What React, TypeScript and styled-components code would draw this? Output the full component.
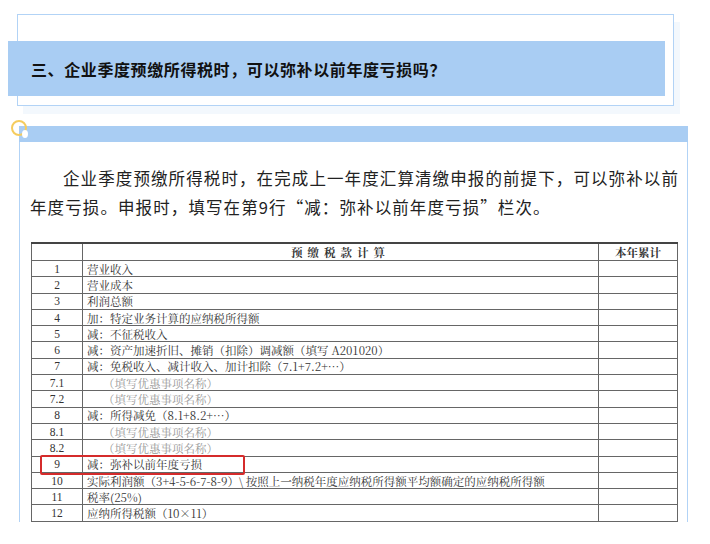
import styled, { createGlobalStyle } from 'styled-components';

const Global = createGlobalStyle`
  body { margin: 0; background: #fff; font-family: "Noto Sans CJK SC", sans-serif; }
`;

const Page = styled.div`
  width: 710px;
  height: 544px;
  position: relative;
  overflow: hidden;
`;
const TitleFrame = styled.div`
  margin: 14px 0 0 17px;
  width: 655px;
  height: 90px;
  border: 1.5px solid #b2d3f6;
  position: relative;
  box-shadow: 6px 8px 0 #f3f8fd;
`;
const TitleBar = styled.div`
  position: absolute;
  left: -10px;
  top: 26px;
  width: 657px;
  height: 55px;
  background: #a9cdf3;
  display: flex;
  align-items: center;
  padding-left: 23px;
  box-sizing: border-box;
  font-size: 16px;
  letter-spacing: 0.6px;
  font-weight: 700;
  color: #111;
`;
const Section = styled.div`
  margin: 20px 0 0 14px;
  width: 674px;
  position: relative;
`;
const SectionBar = styled.div`
  height: 16px;
  background: #a9cdf3;
  margin-left: 5px;
`;
const Ring = styled.div`
  position: absolute;
  left: -3px;
  top: -6px;
  width: 12px;
  height: 12px;
  border: 2px solid #f5cc5e;
  border-radius: 50%;
`;
const Dot = styled.div`
  position: absolute;
  left: 8px;
  top: 4px;
  width: 6px;
  height: 8px;
  border-radius: 50%;
  background: #fff;
`;
const Body = styled.div`
  margin-left: 5px;
  border-left: 1.5px solid #b2d3f6;
  border-right: 1.5px solid #b2d3f6;
  height: 380px;
  padding: 22px 8px 0 10px;
  box-sizing: border-box;
`;
const Para = styled.p`
  margin: 0;
  font-size: 16.5px;
  letter-spacing: 1.1px;
  line-height: 29px;
  color: #222;
  text-indent: 33px;
`;
const Table = styled.table`
  margin: 20px 0 0 1px;
  width: 647px;
  border-collapse: collapse;
  font-family: "Noto Serif CJK SC", "Noto Sans CJK SC", serif;
  font-size: 11.5px;
  color: #333;
  border-top: 2px solid #444;
  td, th { border: 1px solid #666; height: 15.3px; padding: 0 4px; white-space: nowrap; line-height: 14px; }
  th { font-weight: 700; letter-spacing: 5px; height: 16px; }
`;
const Num = styled.td`
  width: 42px;
  text-align: center;
  font-family: "Liberation Serif", serif;
`;
const Item = styled.td<{ $gray?: boolean }>`
  color: ${(p) => (p.$gray ? '#999' : '#333')};
  padding-left: ${(p) => (p.$gray ? '20px' : '4px')} !important;
  position: relative;
`;
const Mark = styled.span`
  position: absolute;
  left: -43px;
  top: -2px;
  width: 201px;
  height: 16px;
  border: 2px solid #d52b2b;
  border-radius: 2px;
`;
const Last = styled.td`
  width: 70px;
`;

const rows: [string, string, boolean?][] = [
  ['1', '营业收入'],
  ['2', '营业成本'],
  ['3', '利润总额'],
  ['4', '加：特定业务计算的应纳税所得额'],
  ['5', '减：不征税收入'],
  ['6', '减：资产加速折旧、摊销（扣除）调减额（填写 A201020）'],
  ['7', '减：免税收入、减计收入、加计扣除（7.1+7.2+…）'],
  ['7.1', '（填写优惠事项名称）', true],
  ['7.2', '（填写优惠事项名称）', true],
  ['8', '减：所得减免（8.1+8.2+…）'],
  ['8.1', '（填写优惠事项名称）', true],
  ['8.2', '（填写优惠事项名称）', true],
  ['9', '减：弥补以前年度亏损'],
  ['10', '实际利润额（3+4-5-6-7-8-9）\\ 按照上一纳税年度应纳税所得额平均额确定的应纳税所得额'],
  ['11', '税率(25%)'],
  ['12', '应纳所得税额（10×11）'],
];

export default function App() {
  return (
    <Page>
      <Global />
      <TitleFrame>
        <TitleBar>三、企业季度预缴所得税时，可以弥补以前年度亏损吗？</TitleBar>
      </TitleFrame>
      <Section>
        <SectionBar />
        <Ring />
        <Dot />
        <Body>
          <Para>
            企业季度预缴所得税时，在完成上一年度汇算清缴申报的前提下，可以弥补以前年度亏损。申报时，填写在第9行“减：弥补以前年度亏损”栏次。
          </Para>
          <Table>
            <thead>
              <tr>
                <th></th>
                <th>预缴税款计算</th>
                <th style={{ letterSpacing: 0 }}>本年累计</th>
              </tr>
            </thead>
            <tbody>
              {rows.map(([n, t, g]) => (
                <tr key={n}>
                  <Num>{n}</Num>
                  <Item $gray={g}>
                    {n === '9' && <Mark />}
                    {t}
                  </Item>
                  <Last />
                </tr>
              ))}
            </tbody>
          </Table>
        </Body>
      </Section>
    </Page>
  );
}
